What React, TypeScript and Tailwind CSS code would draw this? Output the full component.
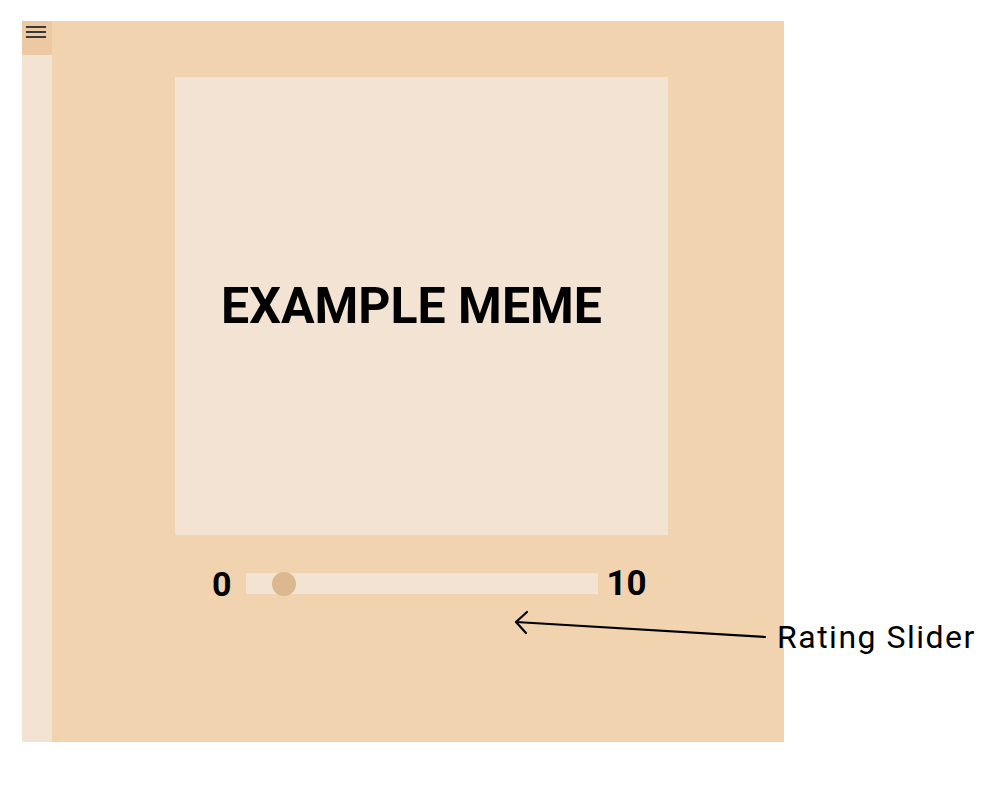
import React from "react";

const Hamburger: React.FC = () => (
  <div className="flex flex-col gap-[3.5px] pt-[5px] pl-[4px]">
    <span className="block h-[1.5px] w-[20px] bg-[#3a3a3a]" />
    <span className="block h-[1.5px] w-[20px] bg-[#3a3a3a]" />
    <span className="block h-[1.5px] w-[20px] bg-[#3a3a3a]" />
  </div>
);

const RatingSlider: React.FC<{ value: number; max: number }> = ({ value, max }) => {
  const pct = (value / max) * 100;
  return (
    <div className="flex items-center">
      <span className="text-[34px] font-bold leading-none text-black">0</span>
      <div className="relative ml-[14px] mr-[9px] h-[21px] w-[352px] bg-[#f2e3d3]">
        <div
          className="absolute top-1/2 h-[24px] w-[24px] -translate-x-1/2 -translate-y-1/2 rounded-full bg-[#dcb891]"
          style={{ left: `${pct}%` }}
        />
      </div>
      <span className="text-[35px] font-bold leading-none text-black">{max}</span>
    </div>
  );
};

export default function App() {
  return (
    <div className="relative h-[790px] w-[985px] bg-white pl-[22px] pt-[21px] font-['Roboto',sans-serif]">
      <div className="flex h-[721px] w-[762px]">
        {/* sidebar */}
        <div className="flex w-[30px] flex-col bg-[#f2e3d3]">
          <div className="h-[34px] bg-[#ecc9a3]">
            <Hamburger />
          </div>
        </div>

        {/* main */}
        <div className="flex flex-1 flex-col bg-[#f2d3b0] pt-[56px]">
          <div className="ml-[123px] flex h-[458px] w-[493px] items-center justify-center bg-[#f2e3d3] pr-[20px]">
            <h1 className="text-[50px] font-bold leading-none text-black">EXAMPLE MEME</h1>
          </div>
          <div className="ml-[160px] mt-[31px]">
            <RatingSlider value={1.1} max={10} />
          </div>
        </div>
      </div>

      {/* annotation */}
      <svg className="absolute left-[505px] top-[605px]" width="270" height="45" viewBox="0 0 270 45">
        <path d="M11 17 L260 32" stroke="#000" strokeWidth="2.2" fill="none" strokeLinecap="round" />
        <path d="M22 7 L11 17 L21 28" stroke="#000" strokeWidth="2.2" fill="none" strokeLinecap="round" strokeLinejoin="round" />
      </svg>
      <span className="absolute left-[777px] top-[621px] text-[32px] leading-none tracking-[1.5px] text-black">Rating Slider</span>
    </div>
  );
}
